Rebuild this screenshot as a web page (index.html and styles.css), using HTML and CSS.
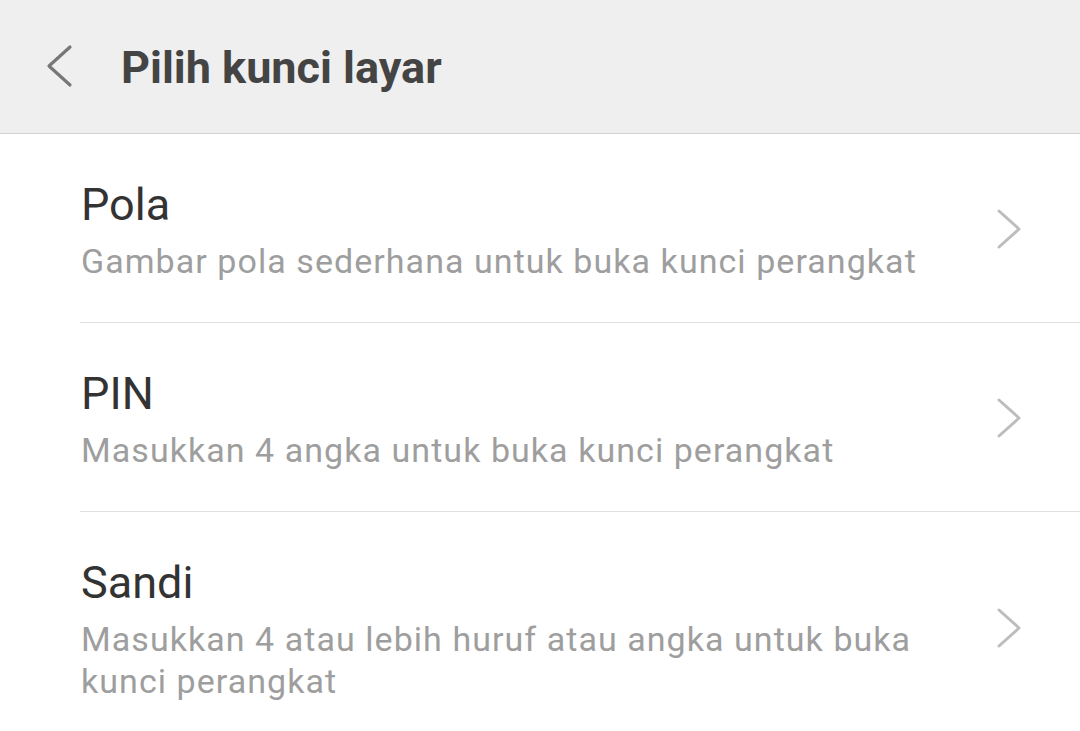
FILE: index.html
```html
<!DOCTYPE html>
<html lang="id">

<head>
  <meta charset="UTF-8">
  <meta name="viewport" content="width=device-width, initial-scale=1.0">
  <title>Pilih kunci layar</title>
  <link rel="stylesheet" href="styles.css">
</head>

<body>
  <div class="header">
    <svg class="back-icon" width="28" height="44" viewBox="0 0 28 44">
      <polyline points="24,3 3,22 24,41" fill="none" stroke="#777" stroke-width="3.2" stroke-linecap="round" stroke-linejoin="round" />
    </svg>
    <h1 class="header-title">Pilih kunci layar</h1>
  </div>

  <ul class="option-list">
    <li class="option">
      <div class="option-text">
        <div class="option-title">Pola</div>
        <div class="option-desc">Gambar pola sederhana untuk buka kunci perangkat</div>
      </div>
      <svg class="chevron" width="26" height="40" viewBox="0 0 26 40">
        <polyline points="3,2 23,20 3,38" fill="none" stroke="#bdbdbd" stroke-width="3" stroke-linecap="round" stroke-linejoin="round" />
      </svg>
    </li>
    <li class="option">
      <div class="option-text">
        <div class="option-title">PIN</div>
        <div class="option-desc">Masukkan 4 angka untuk buka kunci perangkat</div>
      </div>
      <svg class="chevron" width="26" height="40" viewBox="0 0 26 40">
        <polyline points="3,2 23,20 3,38" fill="none" stroke="#bdbdbd" stroke-width="3" stroke-linecap="round" stroke-linejoin="round" />
      </svg>
    </li>
    <li class="option">
      <div class="option-text">
        <div class="option-title">Sandi</div>
        <div class="option-desc">Masukkan 4 atau lebih huruf atau angka untuk buka kunci perangkat</div>
      </div>
      <svg class="chevron" width="26" height="40" viewBox="0 0 26 40">
        <polyline points="3,2 23,20 3,38" fill="none" stroke="#bdbdbd" stroke-width="3" stroke-linecap="round" stroke-linejoin="round" />
      </svg>
    </li>
  </ul>
</body>

</html>
```

FILE: styles.css
```css
body {
  margin: 0;
  background-color: #ffffff;
  font-family: Roboto, "Noto Sans", sans-serif;
  overflow: hidden;
}

.header {
  height: 133px;
  background-color: #efefef;
  border-bottom: 1px solid #d2d2d2;
  display: flex;
  align-items: center;
  padding-left: 46px;
}

.back-icon {
  display: block;
  margin-top: -2px;
}

.header-title {
  margin: 2px 0 0 47px;
  font-size: 45px;
  font-weight: 700;
  color: #444444;
  line-height: 1;
}

.option-list {
  list-style-type: none;
  margin: 0;
  padding: 0;
}

.option {
  margin-left: 80px;
  padding: 41px 58px 40px 1px;
  display: flex;
  align-items: center;
  border-bottom: 1px solid #e0e0e0;
}

.option-text {
  flex: 1;
  padding-right: 76px;
}

.option-title {
  font-size: 45px;
  line-height: 60px;
  color: #333333;
}

.option-desc {
  margin-top: 5px;
  font-size: 34px;
  line-height: 42px;
  letter-spacing: 1.05px;
  color: #9e9e9e;
}

.chevron {
  display: block;
  flex-shrink: 0;
}
```
